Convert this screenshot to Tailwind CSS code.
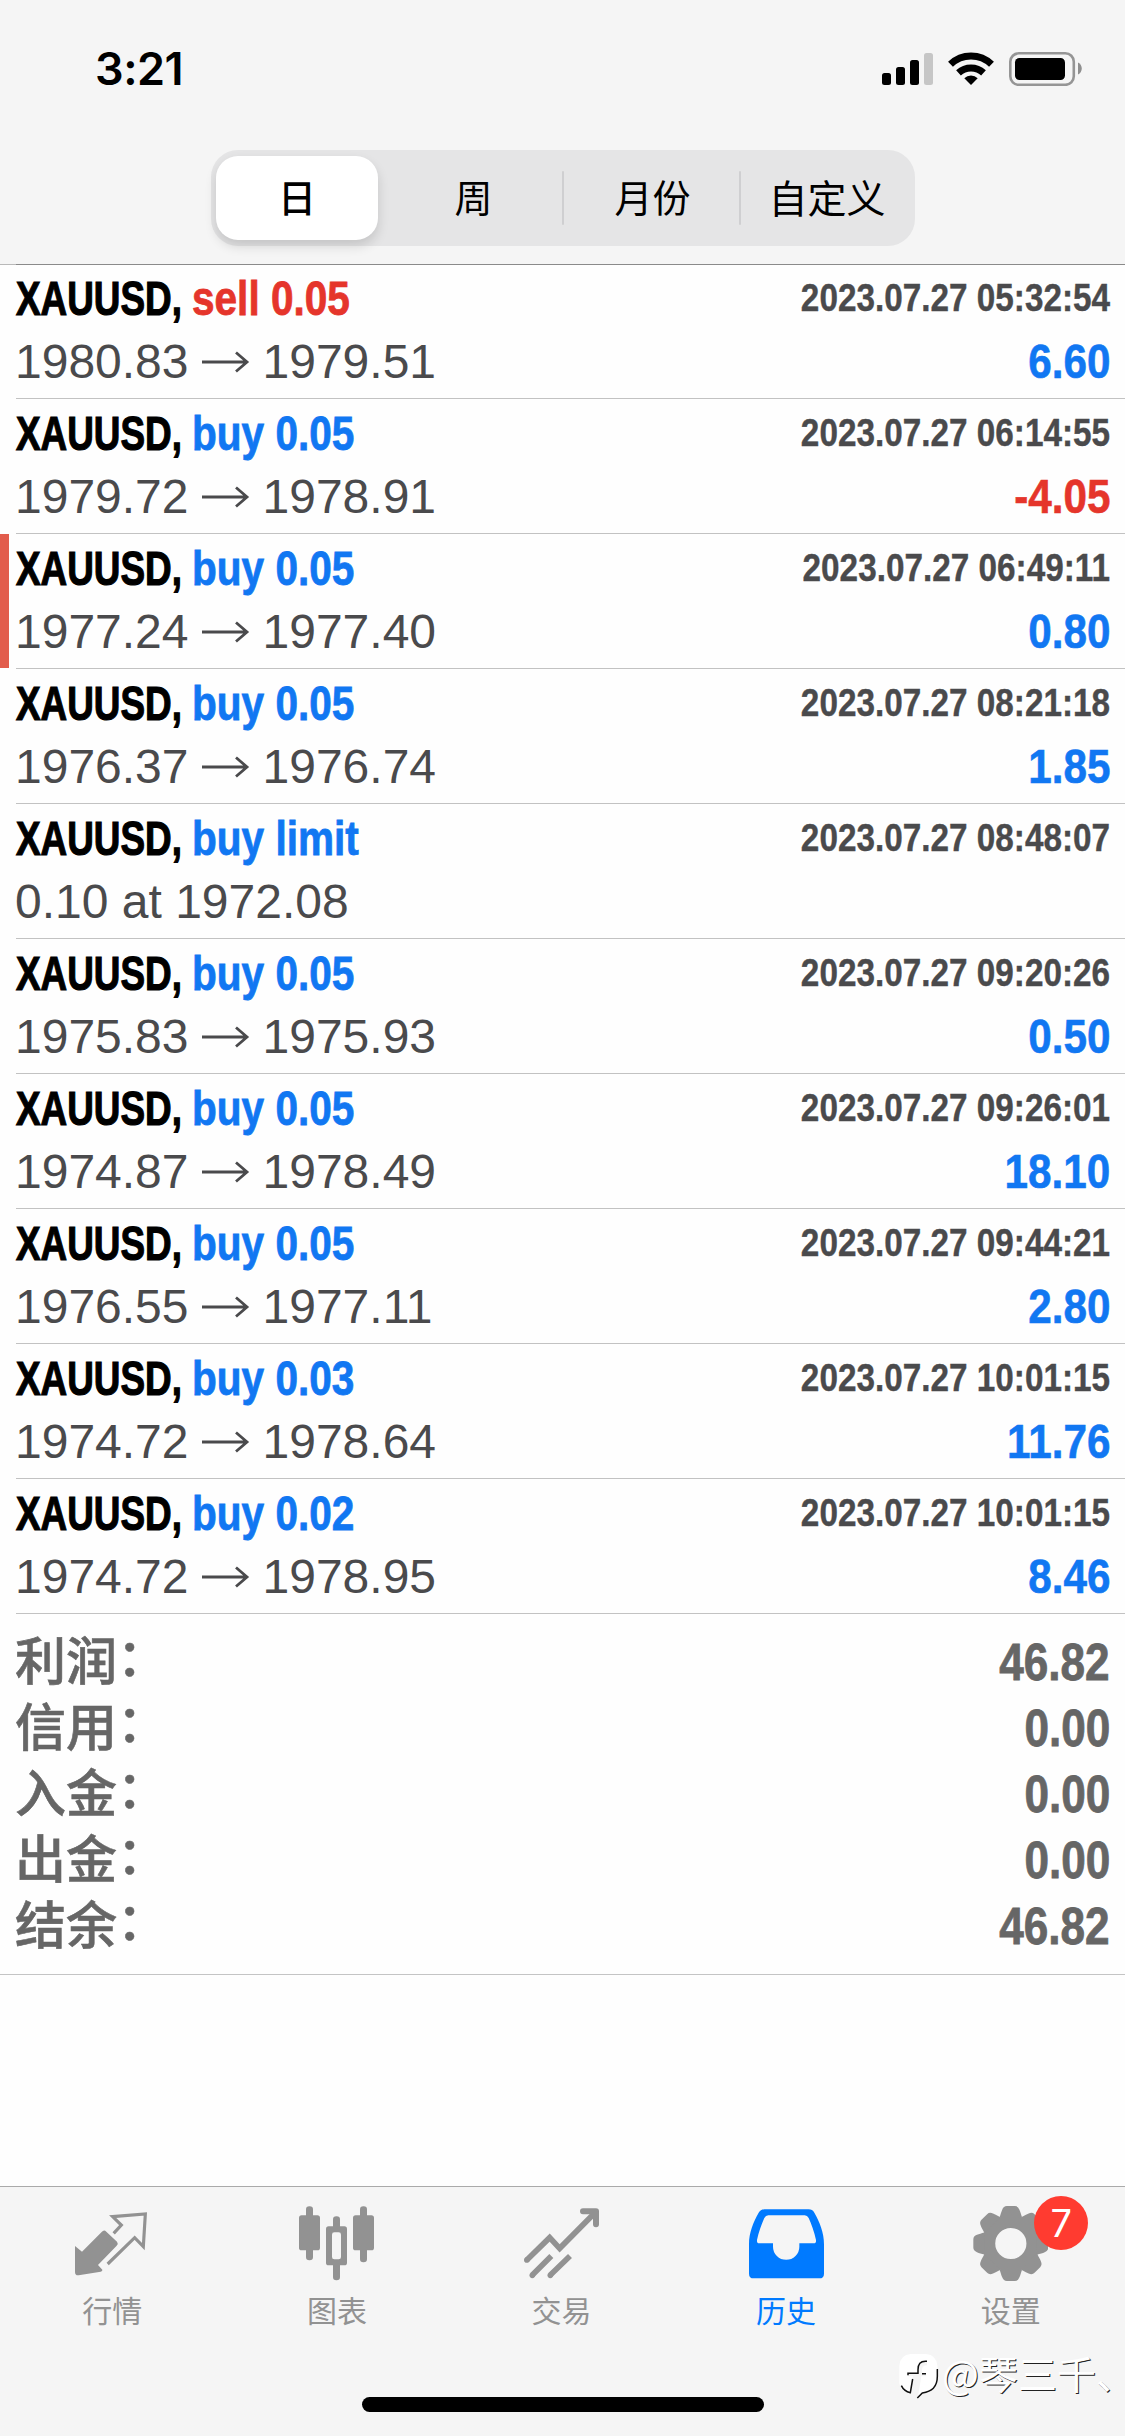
<!DOCTYPE html>
<html lang="zh-CN">
<head>
<meta charset="utf-8">
<title>历史</title>
<script src="https://cdn.jsdelivr.net/npm/@tailwindcss/browser@4"></script>
</head>
<body class="bg-white">
<div class="relative flex h-[2436px] w-[1125px] flex-col overflow-hidden bg-[#fefefe] font-['Liberation_Sans','Noto_Sans_CJK_SC',sans-serif]">

  <header class="flex h-[265px] shrink-0 flex-col bg-[#f5f5f5]">
    <div class="flex h-[150px] items-start justify-between pt-[42px] pr-[43px] pl-[95px]">
      <div class="font-['Inter',sans-serif] text-[45px] leading-[54px] font-semibold tracking-[-0.5px] text-black">3:21</div>
      <svg class="mt-[10px] h-[34px] w-[200px]" viewBox="882 52 200 34">
        <rect x="882" y="73" width="9" height="12" rx="2.5"/>
        <rect x="896" y="67" width="9" height="18" rx="2.5"/>
        <rect x="910" y="60" width="9" height="25" rx="2.5"/>
        <rect x="924" y="53" width="9" height="32" rx="2.5" fill="#c6c6c6"/>
        <g fill="none" stroke="#000" stroke-width="7">
          <path d="M950.5 64.2 A29.5 29.5 0 0 1 991.5 64.2"/>
          <path d="M958.5 72.8 A18.5 18.5 0 0 1 983.5 72.8"/>
        </g>
        <path d="M971 85 L964.3 78.2 A9.6 9.6 0 0 1 977.7 78.2 Z"/>
        <rect x="1010.3" y="53.3" width="63.5" height="31.5" rx="8.5" fill="none" stroke="#959595" stroke-width="2.6"/>
        <rect x="1015" y="58" width="50" height="22" rx="4.5"/>
        <path d="M1078 62.5 C1083 64.5 1083 72.5 1078 74.5 Z" fill="#8f8f8f"/>
      </svg>
    </div>
    <div class="ml-[211px] flex h-24 w-[704px] items-center rounded-[27px] bg-[#e5e5e6] pl-[5px] font-['Noto_Sans_CJK_SC',sans-serif] text-[38px] leading-[80px] text-black">
      <div class="h-[84px] w-[162px] rounded-[22px] bg-white text-center font-medium shadow-[0_6px_12px_rgba(0,0,0,0.14)]">日</div>
      <div class="h-[84px] w-[184px] pl-[7px] text-center">周</div>
      <div class="h-[54px] w-0.5 rounded bg-[#cfcfd1]"></div>
      <div class="h-[84px] w-[175px] pl-[2px] text-center">月份</div>
      <div class="h-[54px] w-0.5 rounded bg-[#cfcfd1]"></div>
      <div class="h-[84px] flex-1 pr-[2px] text-center text-[39px]">自定义</div>
    </div>
    <div class="mt-auto flex h-px">
      <div class="w-4 bg-[#b9b9b9]"></div>
      <div class="flex-1 bg-[#8a8a8a]"></div>
    </div>
  </header>

  <main id="deals" class="flex flex-col"></main>

  <section id="totals" class="flex h-[361px] shrink-0 flex-col border-b border-[#c4c4c4] px-[15px] pt-[16px] text-[51px] leading-[66px] text-[#666]"></section>

  <nav class="relative mt-auto flex h-[250px] shrink-0 items-start border-t border-[#aaa] bg-[#f5f5f5] pr-0.5 pt-[19px] font-['Noto_Sans_CJK_SC',sans-serif] text-[30px] leading-[44px] text-[#929292]">
    <div class="flex flex-1 flex-col items-center gap-[6px]">
      <svg class="h-[75px] w-[75px]" viewBox="3 0 225 225" fill="currentColor" stroke="currentColor">
        <path stroke="none" d="M3 120 L24 137 L83 78 Q90 69 97 77 L129 107 Q134 113 128 119 L72 177 L85 191 Q86 196 80 197 L14 208 Q3 209 3 198 Z"/>
        <path fill="none" stroke-width="9.5" d="M119 82 L142 57 L116 32 L214 24 L208 122 L182 95 L101 174"/>
      </svg>
      <span>行情</span>
    </div>
    <div class="flex flex-1 flex-col items-center gap-[6px]">
      <svg class="h-[75px] w-[75px]" viewBox="0 0 225 225" fill="currentColor">
        <rect x="0" y="28" width="63" height="105" rx="8"/><rect x="21" y="1" width="21" height="162" rx="10"/>
        <rect x="162" y="28" width="63" height="105" rx="8"/><rect x="183" y="1" width="21" height="168" rx="10"/>
        <rect x="102" y="31" width="21" height="45" rx="10"/><rect x="102" y="165" width="21" height="58" rx="10"/>
        <path fill-rule="evenodd" d="M89 61 H136 Q144 61 144 69 V170 Q144 178 136 178 H89 Q81 178 81 170 V69 Q81 61 89 61 Z M106 79 Q99 79 99 86 V153 Q99 160 106 160 H119 Q126 160 126 153 V86 Q126 79 119 79 Z"/>
      </svg>
      <span>图表</span>
    </div>
    <div class="flex flex-1 flex-col items-center gap-[6px]">
      <svg class="h-[75px] w-[75px]" viewBox="0 0 225 225" fill="none" stroke="currentColor" stroke-width="17">
        <path d="M8.5 162 L77 95 L107 127 L215 18"/>
        <path d="M177 16 H216 V55" stroke-width="18" stroke-linecap="round" stroke-linejoin="round"/>
        <path d="M25 207 L82 150 M79 207 L138 150"/>
        <g fill="currentColor" stroke="none"><circle cx="8.5" cy="162" r="8.5"/><circle cx="25" cy="208" r="8.5"/><circle cx="79" cy="208" r="8.5"/></g>
      </svg>
      <span>交易</span>
    </div>
    <div class="flex flex-1 flex-col items-center gap-[6px] text-[#007aff]">
      <svg class="h-[75px] w-[75px]" viewBox="0 0 225 225" fill="currentColor">
        <path fill-rule="evenodd" d="M46 10 H179 Q190 10 196 20 C212 48 225 80 225 115 V203 Q225 217 211 217 H14 Q0 217 0 203 V115 C0 80 13 48 29 20 Q35 10 46 10 Z M58 28 Q50 28 46 36 C38 54 29 78 24 102 Q23 112 31 112 H72 V122 A39.5 39.5 0 0 0 151 122 V112 H194 Q202 112 201 102 C196 78 187 54 179 36 Q175 28 167 28 Z"/>
      </svg>
      <span>历史</span>
    </div>
    <div class="relative flex flex-1 flex-col items-center gap-[6px]">
      <svg class="h-[75px] w-[75px]" viewBox="-114 -113 226 226" fill="currentColor">
        <defs><path id="tooth" d="M-34 -78 C-30 -90 -29 -95 -26 -102 Q-22 -113 -12 -113 H12 Q22 -113 26 -102 C29 -95 30 -90 34 -78 Z"/></defs>
        <path fill-rule="evenodd" d="M0 -86 A86 86 0 1 1 0 86 A86 86 0 1 1 0 -86 Z M0 -47 A47 47 0 1 0 0 47 A47 47 0 1 0 0 -47 Z"/>
        <use href="#tooth"/><use href="#tooth" transform="rotate(45)"/><use href="#tooth" transform="rotate(90)"/><use href="#tooth" transform="rotate(135)"/>
        <use href="#tooth" transform="rotate(180)"/><use href="#tooth" transform="rotate(225)"/><use href="#tooth" transform="rotate(270)"/><use href="#tooth" transform="rotate(315)"/>
      </svg>
      <span>设置</span>
      <div class="absolute top-[-10px] left-[136px] flex h-[54px] w-[54px] items-center justify-center rounded-full bg-[#ff3b30] font-['Inter',sans-serif] text-[38px] leading-none text-white">7</div>
    </div>
    <div class="absolute top-[210px] left-[362px] h-[15px] w-[402px] rounded-full bg-black"></div>
    <div class="absolute top-[158px] left-[898px] flex items-center whitespace-nowrap text-white">
      <svg class="mt-[8px] h-[46px] w-[42px]" viewBox="144 522 126 138" fill="none">
        <path d="M262 560 V592 C262 625 245 640 217 643 L203 658 V640 H172 Q150 636 148 612 V560 Q150 528 182 525 H228 Q260 528 262 560 Z" fill="#fff"/>
        <path d="M231 547 C210 545 204 556 204 572 V583 H174 V592 H189 L180 641 L203 658 L214 592 H228 V583 H216 V572 Q217 559 231 559 Z" fill="#f5f5f5"/>
        <path d="M231 547 C210 545 204 556 204 572 V583 H174 V589 M216 584 H228 M188 600 L181 641 Q162 637 154 620 M262 570 V592 C262 625 245 637 217 642 L202 657" stroke="#111" stroke-width="4.5"/>
      </svg>
      <span class="ml-[2px] text-[39px] leading-[54px] [text-shadow:1px_1px_0_#222]">@琴三千<span class="[font-feature-settings:'halt']">、</span></span>
    </div>
  </nav>
</div>

<script>
  const BLUE = 'text-[#1177f2]', RED = 'text-[#e5352b]';
  const deals = [
    ['sell 0.05', RED, '2023.07.27 05:32:54', '1980.83', '1979.51', '6.60'],
    ['buy 0.05', BLUE, '2023.07.27 06:14:55', '1979.72', '1978.91', '-4.05'],
    ['buy 0.05', BLUE, '2023.07.27 06:49:11', '1977.24', '1977.40', '0.80'],
    ['buy 0.05', BLUE, '2023.07.27 08:21:18', '1976.37', '1976.74', '1.85'],
    ['buy limit', BLUE, '2023.07.27 08:48:07', '0.10 at 1972.08', '', ''],
    ['buy 0.05', BLUE, '2023.07.27 09:20:26', '1975.83', '1975.93', '0.50'],
    ['buy 0.05', BLUE, '2023.07.27 09:26:01', '1974.87', '1978.49', '18.10'],
    ['buy 0.05', BLUE, '2023.07.27 09:44:21', '1976.55', '1977.11', '2.80'],
    ['buy 0.03', BLUE, '2023.07.27 10:01:15', '1974.72', '1978.64', '11.76'],
    ['buy 0.02', BLUE, '2023.07.27 10:01:15', '1974.72', '1978.95', '8.46'],
  ];
  const arrow = `<svg class="mx-[13px] h-6 w-12" viewBox="0 0 48 24" fill="none" stroke="currentColor" stroke-width="2.8"><path d="M0 12 H45 M34 2.5 L45 12 L34 21.5"/></svg>`;
  document.getElementById('deals').innerHTML = deals.map(([kind, tone, time, from, to, profit], i) => `
    <div class="flex shrink-0 ${i ? 'h-[135px]' : 'h-[134px]'}">
      <div class="h-[134px] w-[9px] ${i === 2 ? 'bg-[#e25c4c]' : ''}"></div>
      <div class="ml-[7px] flex flex-1 flex-col justify-end border-b border-[#c2c2c2] pr-[15px] pb-[5px] text-[48px] leading-[63px] text-[#4a4a4c]">
        <div class="flex h-[63px] items-start justify-between whitespace-nowrap">
          <div class="flex font-bold">
            <span class="block w-[176px] origin-left scale-x-[0.768] text-black [-webkit-text-stroke:1.2px_currentColor]">XAUUSD,</span>
            <span class="block origin-left scale-x-[0.845] ${tone} [-webkit-text-stroke:0.8px_currentColor]">${kind}</span>
          </div>
          <span class="block origin-right scale-x-[0.854] text-[39px] leading-[61px] font-bold [-webkit-text-stroke:0.4px_currentColor]">${time}</span>
        </div>
        <div class="-ml-px flex h-[63px] items-center justify-between whitespace-nowrap">
          <div class="flex items-center"><span>${from}</span>${to ? arrow + `<span>${to}</span>` : ''}</div>
          <span class="block origin-right scale-x-[0.88] font-bold ${profit[0] === '-' ? RED : BLUE} [-webkit-text-stroke:0.6px_currentColor]">${profit}</span>
        </div>
      </div>
    </div>`).join('');

  const totals = [['利润', '46.82'], ['信用', '0.00'], ['入金', '0.00'], ['出金', '0.00'], ['结余', '46.82']];
  document.getElementById('totals').innerHTML = totals.map(([label, value]) => `
    <div class="flex h-[66px] justify-between">
      <span class="flex font-medium [-webkit-text-stroke:0.6px_currentColor]">${label}<span class="-mt-1">：</span></span>
      <span class="block origin-right scale-x-[0.865] font-bold [-webkit-text-stroke:0.8px_currentColor]">${value}</span>
    </div>`).join('');
</script>
</body>
</html>
